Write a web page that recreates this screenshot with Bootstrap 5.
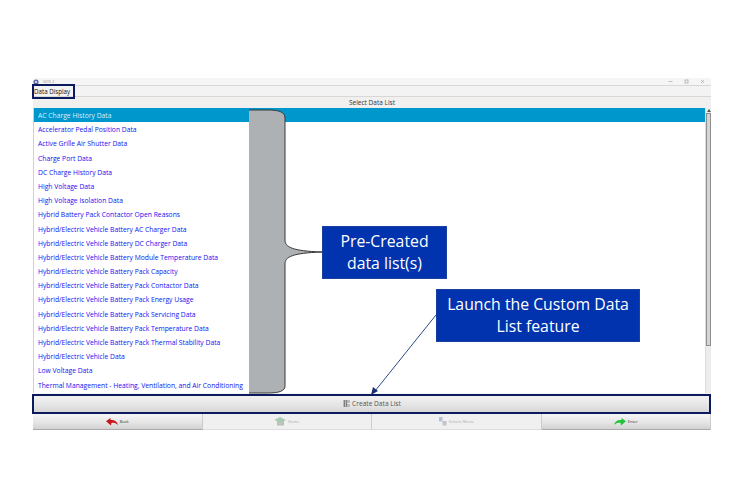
<!DOCTYPE html>
<html lang="en">
<head>
    <meta charset="UTF-8">
    <title>GDS 2 Data Display</title>
    <link href="https://cdn.jsdelivr.net/npm/bootstrap@5.3.0/dist/css/bootstrap.min.css" rel="stylesheet">
    <style>
        body { background: #fff; font-family: "Open Sans", "Liberation Sans", sans-serif; }
        .stage { position: relative; width: 740px; height: 480px; padding: 78px 29px 0 33px; overflow: hidden; }
        .app { height: 352px; background: #f3f3f3; }
        .title-bar { height: 7px; font-size: 4px; line-height: 7px; color: #999; background: #f5f5f5; }
        .title-bar svg { display: block; flex-shrink: 0; }
        .win-btns { gap: 11px; padding-right: 6px; }
        .menu-bar { height: 12px; font-size: 6.2px; line-height: 11px; border-top: 1px solid #d8d8d8; border-bottom: 1px solid #d8d8d8; color: #111; padding-left: 1px; }
        .list-title { height: 11px; font-size: 6.5px; line-height: 11px; color: #333; background: #f2f0ee; }
        .list-area { height: 285px; background: #fff; border-left: 1px solid #d0d0d0; }
        .data-list { width: 672px; }
        .data-list .list-group-item { height: 14.2px; padding: 0 0 0 4px; border: 0; border-radius: 0; background: transparent; font-size: 6.75px; line-height: 15px; color: #1212f0; white-space: nowrap; }
        .data-list .list-group-item.active { background: #0097cc; color: #d8f0fa; }
        .scroll { width: 6px; background: #ececec; border-left: 1px solid #ddd; }
        .scroll-arrow { display: block; margin: 1px auto 0; }
        .scroll-thumb { height: 233px; background: #d4d4d4; border: 1px solid #8f8f8f; margin-top: 1px; }
        .gds-btn { background: linear-gradient(#f6f6f6, #e4e4e4 60%, #d2d2d2); border: 0; border-radius: 0; padding: 0; color: #555; }
        .create-btn { height: 21px; font-size: 6.6px; gap: 2px; }
        .nav-row { height: 16px; }
        .nav-row .gds-btn { flex: 1; font-size: 4px; gap: 2px; color: #333; border-right: 1px solid #ccc; border-bottom: 1px solid #aaa; }
        .nav-row .gds-btn:disabled { background: #f0f0f0; color: #aaa; opacity: 1; border-bottom-color: #ddd; }
        .callout { position: absolute; z-index: 6; background: #0033ad; border: 1px solid #1a3f9c; color: #fff; font-family: "Open Sans", sans-serif; font-size: 15.8px; line-height: 22px; text-align: center; display: flex; align-items: center; justify-content: center; padding-bottom: 2px; }
        .callout-lists { left: 322px; top: 226px; width: 125px; height: 53px; }
        .callout-launch { left: 436px; top: 289px; width: 204px; height: 53px; }
        .outline { position: absolute; z-index: 6; border: 2px solid #0c1a5e; }
        .outline-menu { left: 32px; top: 84px; width: 43px; height: 15px; }
        .outline-create { left: 32px; top: 394px; width: 679px; height: 20px; }
        .shapes { position: absolute; z-index: 5; left: 0; top: 0; }
    </style>
</head>
<body>
    <div class="stage">
        <div class="app d-flex flex-column">
            <div class="title-bar d-flex justify-content-between align-items-center">
                <div class="d-flex align-items-center gap-1">
                    <svg width="6" height="6" viewBox="0 0 6 6"><circle cx="3" cy="3" r="2.6" fill="#5a6aa8"/><circle cx="3" cy="3" r="1.1" fill="#e8e8f0"/></svg>
                    <span>GDS 2</span>
                </div>
                <div class="win-btns d-flex">
                    <svg width="5" height="5" viewBox="0 0 5 5"><path d="M.5 2.500h4" stroke="#aaa" stroke-width=".7"/></svg>
                    <svg width="5" height="5" viewBox="0 0 5 5"><rect x="1" y="1" width="3" height="3" fill="none" stroke="#aaa" stroke-width=".8"/></svg>
                    <svg width="5" height="5" viewBox="0 0 5 5"><path d="M1 1l3 3M4 1 1 4" stroke="#aaa" stroke-width=".7"/></svg>
                </div>
            </div>
            <div class="menu-bar">Data Display</div>
            <div class="list-title text-center">Select Data List</div>
            <div class="list-area d-flex justify-content-between">
                <div class="list-group data-list">
                    <a class="list-group-item active">AC Charge History Data</a>
                    <a class="list-group-item">Accelerator Pedal Position Data</a>
                    <a class="list-group-item">Active Grille Air Shutter Data</a>
                    <a class="list-group-item">Charge Port Data</a>
                    <a class="list-group-item">DC Charge History Data</a>
                    <a class="list-group-item">High Voltage Data</a>
                    <a class="list-group-item">High Voltage Isolation Data</a>
                    <a class="list-group-item">Hybrid Battery Pack Contactor Open Reasons</a>
                    <a class="list-group-item">Hybrid/Electric Vehicle Battery AC Charger Data</a>
                    <a class="list-group-item">Hybrid/Electric Vehicle Battery DC Charger Data</a>
                    <a class="list-group-item">Hybrid/Electric Vehicle Battery Module Temperature Data</a>
                    <a class="list-group-item">Hybrid/Electric Vehicle Battery Pack Capacity</a>
                    <a class="list-group-item">Hybrid/Electric Vehicle Battery Pack Contactor Data</a>
                    <a class="list-group-item">Hybrid/Electric Vehicle Battery Pack Energy Usage</a>
                    <a class="list-group-item">Hybrid/Electric Vehicle Battery Pack Servicing Data</a>
                    <a class="list-group-item">Hybrid/Electric Vehicle Battery Pack Temperature Data</a>
                    <a class="list-group-item">Hybrid/Electric Vehicle Battery Pack Thermal Stability Data</a>
                    <a class="list-group-item">Hybrid/Electric Vehicle Data</a>
                    <a class="list-group-item">Low Voltage Data</a>
                    <a class="list-group-item">Thermal Management - Heating, Ventilation, and Air Conditioning</a>
                </div>
                <div class="scroll">
                    <svg class="scroll-arrow" width="4" height="3" viewBox="0 0 4 3"><path d="M2 0 4 3H0z" fill="#555"/></svg>
                    <div class="scroll-thumb"></div>
                </div>
            </div>
            <button class="gds-btn create-btn d-flex align-items-center justify-content-center" type="button">
                <svg width="7" height="7" viewBox="0 0 7 7"><rect x="0" y="0" width="7" height="7" fill="#bbb"/><path d="M1.500 0v7M3.500 0v7" stroke="#777" stroke-width=".9"/><path d="M4.500 3.500h2.500" stroke="#eee" stroke-width="1"/></svg>
                <span>Create Data List</span>
            </button>
            <div class="nav-row d-flex">
                <button class="gds-btn d-flex align-items-center justify-content-center" type="button">
                    <svg width="12" height="8" viewBox="0 0 12 8"><path d="M0 3.200 4.500 0v2C8 1.500 11 3 12 7 10 5 7.500 4.500 5.500 4.800L5 7.500z" fill="#c8141c"/></svg>
                    <span>Back</span>
                </button>
                <button class="gds-btn d-flex align-items-center justify-content-center" type="button" disabled>
                    <svg width="12" height="10" viewBox="0 0 12 10"><path d="M0 3 6 0 12 3 10 4V8.500H3V4z" fill="#a9cbb6"/><rect x="5" y="5" width="2.500" height="3.500" fill="#d9b8b8"/></svg>
                    <span>Home</span>
                </button>
                <button class="gds-btn d-flex align-items-center justify-content-center" type="button" disabled>
                    <svg width="8" height="9" viewBox="0 0 8 9"><rect x="0" y="0" width="3.500" height="4.500" fill="#b4c1d6"/><rect x="3.500" y="4" width="4" height="4.500" fill="#c4c4cc"/></svg>
                    <span>Vehicle Menu</span>
                </button>
                <button class="gds-btn d-flex align-items-center justify-content-center" type="button">
                    <svg width="12" height="8" viewBox="0 0 12 8"><path d="M12 3.200 7.500 0v2C4 1.500 1 3 0 7 2 5 4.500 4.500 6.500 4.800L7 7.500z" fill="#22c43c"/></svg>
                    <span>Enter</span>
                </button>
            </div>
        </div>

        <svg class="shapes" width="740" height="480" viewBox="0 0 740 480">
            <path d="M249 110H268C279 110 285 112 285 118V240C285 247 292 251 322 252C292 253 285 257 285 264V386C285 391 279 393 268 393H249Z" fill="#adb1b3"/>
            <path d="M249 110H268C279 110 285 112 285 118V240C285 247 292 251 322 252C292 253 285 257 285 264V386C285 391 279 393 268 393H249" fill="none" stroke="#3a3a3a" stroke-width="1"/>
            <path d="M436 315 375 391" stroke="#2b4a8c" stroke-width="1" fill="none"/>
            <path d="M371 395 373 387 378 391Z" fill="#1a2f70"/>
        </svg>
        <div class="outline outline-menu"></div>
        <div class="outline outline-create"></div>
        <div class="callout callout-lists"><span>Pre-Created<br>data list(s)</span></div>
        <div class="callout callout-launch"><span>Launch the Custom Data<br>List feature</span></div>
    </div>
    <script src="https://cdn.jsdelivr.net/npm/bootstrap@5.3.0/dist/js/bootstrap.bundle.min.js"></script>
</body>
</html>
